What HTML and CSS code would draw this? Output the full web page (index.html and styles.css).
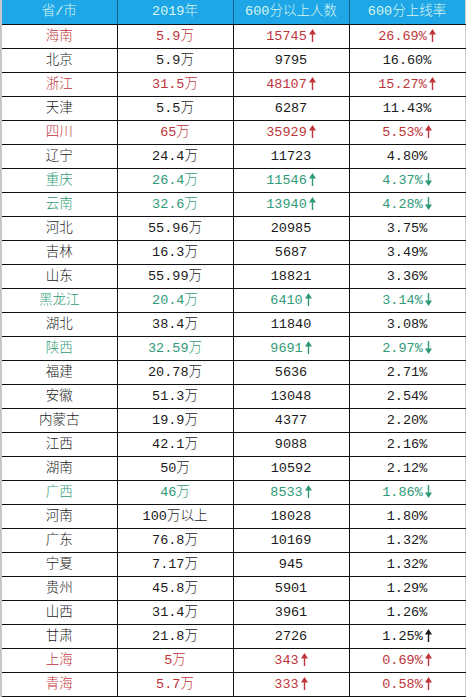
FILE: index.html
```html
<!DOCTYPE html>
<html lang="zh">
<head>
<meta charset="utf-8">
<title>600分以上人数</title>
<link rel="stylesheet" href="styles.css">
</head>
<body>
<table class="t">
<colgroup><col class="c"><col class="c"><col class="c"><col class="c"></colgroup>
<thead>
<tr><th>省/市</th><th>2019年</th><th>600分以上人数</th><th>600分上线率</th></tr>
</thead>
<tbody>
<tr class="red"><td>海南</td><td>5.9万</td><td>15745<svg class="ar" viewBox="0 0 7 13"><path d="M3.5 0L7 5.5H4.2V13H2.8V5.5H0Z"/></svg></td><td>26.69%<svg class="ar" viewBox="0 0 7 13"><path d="M3.5 0L7 5.5H4.2V13H2.8V5.5H0Z"/></svg></td></tr>
<tr><td>北京</td><td>5.9万</td><td>9795</td><td>16.60%</td></tr>
<tr class="red"><td>浙江</td><td>31.5万</td><td>48107<svg class="ar" viewBox="0 0 7 13"><path d="M3.5 0L7 5.5H4.2V13H2.8V5.5H0Z"/></svg></td><td>15.27%<svg class="ar" viewBox="0 0 7 13"><path d="M3.5 0L7 5.5H4.2V13H2.8V5.5H0Z"/></svg></td></tr>
<tr><td>天津</td><td>5.5万</td><td>6287</td><td>11.43%</td></tr>
<tr class="red"><td>四川</td><td>65万</td><td>35929<svg class="ar" viewBox="0 0 7 13"><path d="M3.5 0L7 5.5H4.2V13H2.8V5.5H0Z"/></svg></td><td>5.53%<svg class="ar" viewBox="0 0 7 13"><path d="M3.5 0L7 5.5H4.2V13H2.8V5.5H0Z"/></svg></td></tr>
<tr><td>辽宁</td><td>24.4万</td><td>11723</td><td>4.80%</td></tr>
<tr class="green"><td>重庆</td><td>26.4万</td><td>11546<svg class="ar" viewBox="0 0 7 13"><path d="M3.5 0L7 5.5H4.2V13H2.8V5.5H0Z"/></svg></td><td>4.37%<svg class="ar down" viewBox="0 0 7 13"><path d="M3.5 0L7 5.5H4.2V13H2.8V5.5H0Z"/></svg></td></tr>
<tr class="green"><td>云南</td><td>32.6万</td><td>13940<svg class="ar" viewBox="0 0 7 13"><path d="M3.5 0L7 5.5H4.2V13H2.8V5.5H0Z"/></svg></td><td>4.28%<svg class="ar down" viewBox="0 0 7 13"><path d="M3.5 0L7 5.5H4.2V13H2.8V5.5H0Z"/></svg></td></tr>
<tr><td>河北</td><td>55.96万</td><td>20985</td><td>3.75%</td></tr>
<tr><td>吉林</td><td>16.3万</td><td>5687</td><td>3.49%</td></tr>
<tr><td>山东</td><td>55.99万</td><td>18821</td><td>3.36%</td></tr>
<tr class="green"><td>黑龙江</td><td>20.4万</td><td>6410<svg class="ar" viewBox="0 0 7 13"><path d="M3.5 0L7 5.5H4.2V13H2.8V5.5H0Z"/></svg></td><td>3.14%<svg class="ar down" viewBox="0 0 7 13"><path d="M3.5 0L7 5.5H4.2V13H2.8V5.5H0Z"/></svg></td></tr>
<tr><td>湖北</td><td>38.4万</td><td>11840</td><td>3.08%</td></tr>
<tr class="green"><td>陕西</td><td>32.59万</td><td>9691<svg class="ar" viewBox="0 0 7 13"><path d="M3.5 0L7 5.5H4.2V13H2.8V5.5H0Z"/></svg></td><td>2.97%<svg class="ar down" viewBox="0 0 7 13"><path d="M3.5 0L7 5.5H4.2V13H2.8V5.5H0Z"/></svg></td></tr>
<tr><td>福建</td><td>20.78万</td><td>5636</td><td>2.71%</td></tr>
<tr><td>安徽</td><td>51.3万</td><td>13048</td><td>2.54%</td></tr>
<tr><td>内蒙古</td><td>19.9万</td><td>4377</td><td>2.20%</td></tr>
<tr><td>江西</td><td>42.1万</td><td>9088</td><td>2.16%</td></tr>
<tr><td>湖南</td><td>50万</td><td>10592</td><td>2.12%</td></tr>
<tr class="green"><td>广西</td><td>46万</td><td>8533<svg class="ar" viewBox="0 0 7 13"><path d="M3.5 0L7 5.5H4.2V13H2.8V5.5H0Z"/></svg></td><td>1.86%<svg class="ar down" viewBox="0 0 7 13"><path d="M3.5 0L7 5.5H4.2V13H2.8V5.5H0Z"/></svg></td></tr>
<tr><td>河南</td><td>100万以上</td><td>18028</td><td>1.80%</td></tr>
<tr><td>广东</td><td>76.8万</td><td>10169</td><td>1.32%</td></tr>
<tr><td>宁夏</td><td>7.17万</td><td>945</td><td>1.32%</td></tr>
<tr><td>贵州</td><td>45.8万</td><td>5901</td><td>1.29%</td></tr>
<tr><td>山西</td><td>31.4万</td><td>3961</td><td>1.26%</td></tr>
<tr><td>甘肃</td><td>21.8万</td><td>2726</td><td>1.25%<svg class="ar" viewBox="0 0 7 13"><path d="M3.5 0L7 5.5H4.2V13H2.8V5.5H0Z"/></svg></td></tr>
<tr class="red"><td>上海</td><td>5万</td><td>343<svg class="ar" viewBox="0 0 7 13"><path d="M3.5 0L7 5.5H4.2V13H2.8V5.5H0Z"/></svg></td><td>0.69%<svg class="ar" viewBox="0 0 7 13"><path d="M3.5 0L7 5.5H4.2V13H2.8V5.5H0Z"/></svg></td></tr>
<tr class="red"><td>青海</td><td>5.7万</td><td>333<svg class="ar" viewBox="0 0 7 13"><path d="M3.5 0L7 5.5H4.2V13H2.8V5.5H0Z"/></svg></td><td>0.58%<svg class="ar" viewBox="0 0 7 13"><path d="M3.5 0L7 5.5H4.2V13H2.8V5.5H0Z"/></svg></td></tr>
</tbody>
</table>
</body>
</html>
```

FILE: styles.css
```css
html, body {
  margin: 0;
  padding: 0;
  background: #ffffff;
}
.t {
  border-collapse: collapse;
  table-layout: fixed;
  width: 465px;
  margin-left: 0;
  font-family: "Liberation Mono", "Noto Sans CJK SC", monospace;
  font-size: 13.5px;
  font-weight: 300;
  color: #1a1a1a;
}
.c {
  width: 116px;
}
.t th, .t td {
  padding: 0;
  text-align: center;
  vertical-align: middle;
  border: 1px solid #111111;
  white-space: nowrap;
  line-height: 16px;
}
.t th {
  height: 24px;
  background: #1ea6e6;
  color: #d8f6ee;
  font-weight: 300;
  border-top: none;
  border-color: #0d5f8f;
  border-bottom-color: #111111;
}
.t td {
  height: 23px;
}
.t tr > :first-child {
  border-left: 2px solid #c8c8c8;
}
.t tr > :last-child {
  border-right: 1px solid #d0d0d0;
}
.red td {
  color: #c0353a;
}
.green td {
  color: #2f9a76;
}
.ar {
  width: 7px;
  height: 13px;
  margin-left: 2px;
  vertical-align: -2px;
  fill: currentColor;
}
.ar.down {
  transform: rotate(180deg);
}
```
